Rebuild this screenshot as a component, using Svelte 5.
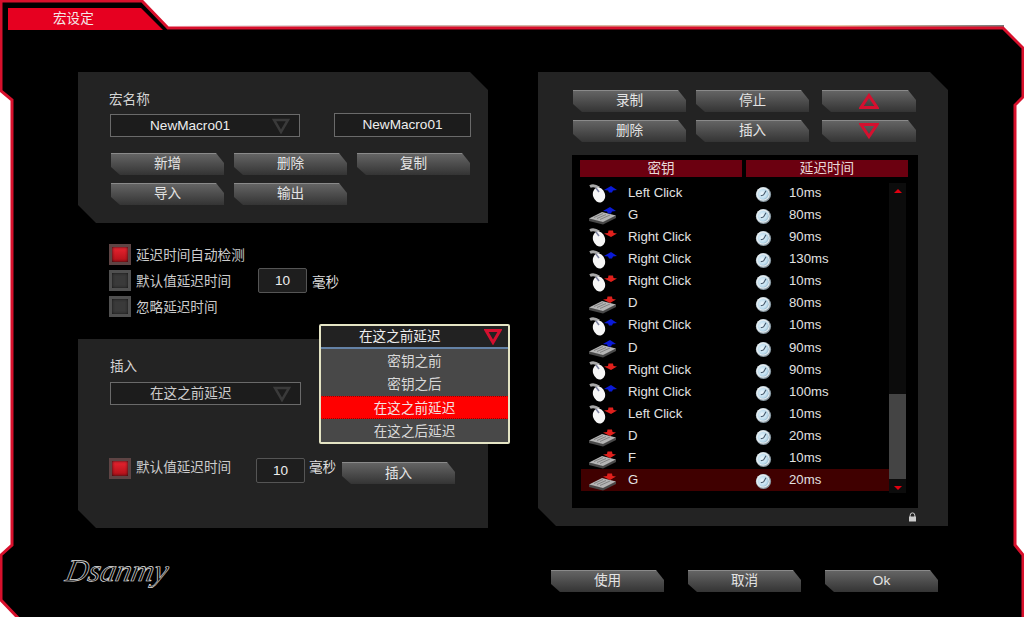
<script lang="ts">
  const rows = [
    { dev: "mouse", dir: "up", key: "Left Click", delay: "10ms" },
    { dev: "kbd", dir: "up", key: "G", delay: "80ms" },
    { dev: "mouse", dir: "down", key: "Right Click", delay: "90ms" },
    { dev: "mouse", dir: "up", key: "Right Click", delay: "130ms" },
    { dev: "mouse", dir: "down", key: "Right Click", delay: "10ms" },
    { dev: "kbd", dir: "down", key: "D", delay: "80ms" },
    { dev: "mouse", dir: "up", key: "Right Click", delay: "10ms" },
    { dev: "kbd", dir: "up", key: "D", delay: "90ms" },
    { dev: "mouse", dir: "down", key: "Right Click", delay: "90ms" },
    { dev: "mouse", dir: "up", key: "Right Click", delay: "100ms" },
    { dev: "mouse", dir: "down", key: "Left Click", delay: "10ms" },
    { dev: "kbd", dir: "down", key: "D", delay: "20ms" },
    { dev: "kbd", dir: "down", key: "F", delay: "10ms" },
    { dev: "kbd", dir: "down", key: "G", delay: "20ms" },
  ];
  const selectedRow = 13;
  const insertOptions = ["密钥之前", "密钥之后", "在这之前延迟", "在这之后延迟"];
  const arrowUp = "M18 9 L25 5 L31 9 L27 9.5 L26 11.5 L23 11.5 L22 9.5 Z";
  const arrowDown = "M18 8.5 L22 8 L22.5 5.5 L27 5.5 L27.5 8 L31 8.5 L25 12 Z";
  let activeOption = $state(2);
  let delayMode = $state(0);
</script>

<div class="window">
  <svg class="frame" width="1024" height="617" viewBox="0 0 1024 617" aria-hidden="true">
    <defs>
      <linearGradient id="edge" x1="0" x2="1" y1="0" y2="0">
        <stop offset="0" stop-color="#fff" />
        <stop offset="0.25" stop-color="#c9b3b0" />
        <stop offset="0.55" stop-color="#d8b9a0" />
        <stop offset="0.8" stop-color="#e8c8a8" />
        <stop offset="1" stop-color="#777" />
      </linearGradient>
      <radialGradient id="face" cx="0.42" cy="0.45" r="0.65">
        <stop offset="0" stop-color="#eef7fc" />
        <stop offset="0.7" stop-color="#bcdcee" />
        <stop offset="1" stop-color="#86a4b8" />
      </radialGradient>
    </defs>
    <rect x="168" y="25" width="836" height="2" fill="url(#edge)" />
    <polygon
      points="1,1 142,1 168,28 1003,28 1023,48 1023,97 1015,105 1015,545 1023,555 1023,620 20,620 1,600 1,555 12,545 12,100 1,91"
      fill="#000"
      stroke="#d8102c"
      stroke-width="3"
    />
    <polygon points="8,8 141,8 163,30 8,30" fill="#e60020" />
  </svg>

  <div class="tab">宏设定</div>

  <main>
    <section class="left">
      <div class="panel name-panel">
        <div class="label">宏名称</div>
        <div class="name-row">
          <div class="select">
            <span>NewMacro01</span>
            <svg class="caret" width="18" height="16" viewBox="0 0 18 16"><path d="M2 2 H16 L9 14 Z" fill="none" stroke="#3a3a3a" stroke-width="2.5" /></svg>
          </div>
          <div class="text-input">NewMacro01</div>
        </div>
        <div class="btn-grid">
          <button type="button" class="btn">新增</button>
          <button type="button" class="btn">删除</button>
          <button type="button" class="btn">复制</button>
          <button type="button" class="btn">导入</button>
          <button type="button" class="btn">输出</button>
        </div>
      </div>

      <div class="options">
        {#each ["延迟时间自动检测", "默认值延迟时间", "忽略延迟时间"] as label, i}
          <div class="check-row">
            <button type="button" class="check" class:on={delayMode === i} aria-label={label} onclick={() => (delayMode = i)}></button>
            <span class="check-label">{label}</span>
            {#if i === 1}
              <div class="num">10</div>
              <span class="unit">毫秒</span>
            {/if}
          </div>
        {/each}
      </div>

      <div class="panel insert-panel">
        <div class="label">插入</div>
        <div class="select insert-select">
          <span>在这之前延迟</span>
          <svg class="caret" width="18" height="16" viewBox="0 0 18 16"><path d="M2 2 H16 L9 14 Z" fill="none" stroke="#3a3a3a" stroke-width="2.5" /></svg>
        </div>
        <div class="insert-row">
          <button type="button" class="check on" aria-label="默认值延迟时间"></button>
          <span class="check-label">默认值延迟时间</span>
          <div class="num">10</div>
          <span class="unit">毫秒</span>
          <button type="button" class="btn">插入</button>
        </div>
      </div>
    </section>

    <section class="panel right">
      <div class="tools">
        <button type="button" class="btn">录制</button>
        <button type="button" class="btn">停止</button>
        <button type="button" class="btn small" aria-label="上移">
          <svg width="20" height="16" viewBox="0 0 20 16"><path d="M10 2.5 L18 14.5 H2 Z" fill="none" stroke="#d5102f" stroke-width="3" /></svg>
        </button>
        <button type="button" class="btn">删除</button>
        <button type="button" class="btn">插入</button>
        <button type="button" class="btn small" aria-label="下移">
          <svg width="20" height="16" viewBox="0 0 20 16"><path d="M2 1.5 H18 L10 13.5 Z" fill="none" stroke="#d5102f" stroke-width="3" /></svg>
        </button>
      </div>

      <div class="list">
        <div class="list-head">
          <div>密钥</div>
          <div>延迟时间</div>
        </div>
        <div class="list-body">
          <div class="rows">
            {#each rows as row, i}
              <div class="row" class:selected={i === selectedRow}>
                <svg class="dev" width="34" height="22" viewBox="0 0 34 22" aria-hidden="true">
                  {#if row.dev === "mouse"}
                    <path d="M4 5.5 Q8 3.5 13 7" fill="none" stroke="#a8a8a8" stroke-width="3" />
                    <ellipse cx="13" cy="14" rx="6" ry="7.6" transform="rotate(-18 13 14)" fill="#f6f6f6" />
                    <path d="M10 7 L13 11" stroke="#7f84a2" stroke-width="1.5" />
                  {:else}
                    <path d="M3 15.5 L3 18 L17 21.5 L30 15 L30 12.5 L17 18.5 Z" fill="#484848" />
                    <path d="M3 15.5 L16 9 L30 12.5 L17 19 Z" fill="#b4b4b4" />
                    <path d="M8 14.5 L17 10.5 M11 15.5 L20 11.5 M14 16.5 L24 12" stroke="#7c7c7c" stroke-width="0.9" />
                  {/if}
                  <path
                    d={row.dir === "up" ? arrowUp : arrowDown}
                    transform={row.dev === "mouse" ? undefined : "translate(-1 -1)"}
                    fill={row.dir === "up" ? "#0a1ad8" : "#e0201c"}
                  />
                </svg>
                <span class="key">{row.key}</span>
                <svg class="clock" width="17" height="17" viewBox="0 0 17 17" aria-hidden="true">
                  <circle cx="8.5" cy="8.5" r="7.6" fill="#8a9aa4" />
                  <circle cx="8" cy="8" r="6.8" fill="#e4ecf0" />
                  <circle cx="8.2" cy="8.2" r="5.4" fill="url(#face)" />
                  <path d="M8.5 9 L11 4.8 M8.5 9 L5.8 9.8" stroke="#44586a" stroke-width="1.1" />
                </svg>
                <span class="delay">{row.delay}</span>
              </div>
            {/each}
          </div>
          <div class="scroll">
            <span class="arrow up"></span>
            <div class="thumb"></div>
            <span class="arrow down"></span>
          </div>
        </div>
      </div>

      <svg class="lock" width="9" height="10" viewBox="0 0 9 10" aria-hidden="true">
        <path d="M2.2 5 V3.2 a2.3 2.3 0 0 1 4.6 0 V5" fill="none" stroke="#ccc" stroke-width="1" />
        <rect x="1" y="4.5" width="7" height="5" fill="#ccc" />
      </svg>
    </section>
  </main>

  <footer>
    <div class="logo">Dsanmy</div>
    <div class="actions">
      <button type="button" class="btn">使用</button>
      <button type="button" class="btn">取消</button>
      <button type="button" class="btn">Ok</button>
    </div>
  </footer>

  <div class="popup">
    <div class="popup-head">
      <span>在这之前延迟</span>
      <svg width="18" height="16" viewBox="0 0 18 16"><path d="M2 1.5 H16 L9 13.5 Z" fill="none" stroke="#d5102f" stroke-width="3" /></svg>
    </div>
    <ul>
      {#each insertOptions as option, i}
        <li>
          <button type="button" class:active={i === activeOption} onclick={() => (activeOption = i)}>{option}</button>
        </li>
      {/each}
    </ul>
  </div>
</div>

<style>
  :global(body) {
    background: #fff;
  }
  .window {
    position: relative;
    width: 1024px;
    height: 617px;
    overflow: hidden;
    font-family: "Liberation Sans", "Noto Sans CJK SC", sans-serif;
    font-size: 13.6px;
    color: #ddd;
  }
  .frame {
    position: absolute;
    inset: 0;
  }
  .tab {
    position: absolute;
    top: 8px;
    left: 53px;
    line-height: 21px;
    color: #f4e6e6;
  }
  main {
    position: relative;
    display: grid;
    grid-template-columns: 410px 410px;
    column-gap: 50px;
    padding: 72px 0 0 78px;
    height: 526px;
    box-sizing: border-box;
  }
  footer {
    position: relative;
    display: flex;
    justify-content: space-between;
    padding: 44px 86px 0 62px;
  }
  .panel {
    background: #232323;
    clip-path: polygon(0 0, calc(100% - 18px) 0, 100% 18px, 100% 100%, 18px 100%, 0 calc(100% - 18px));
    box-sizing: border-box;
  }
  .left {
    display: flex;
    flex-direction: column;
  }
  .label {
    line-height: 20px;
    color: #d4d4d4;
  }
  .name-panel {
    height: 151px;
    padding: 18px 17px 0 31px;
  }
  .name-row {
    display: flex;
    align-items: flex-end;
    justify-content: space-between;
    margin: 3px 0 16px 1px;
  }
  .select {
    position: relative;
    display: flex;
    align-items: center;
    width: 190px;
    height: 23px;
    box-sizing: border-box;
    border: 1px solid #6a6a6a;
    background: #1c1c1c;
    padding-left: 39px;
    color: #eee;
  }
  .caret {
    position: absolute;
    right: 9px;
    top: 3px;
  }
  .text-input {
    width: 137px;
    height: 24px;
    box-sizing: border-box;
    border: 1px solid #6a6a6a;
    background: #1c1c1c;
    text-align: center;
    line-height: 21px;
    color: #eee;
  }
  .btn-grid {
    display: grid;
    grid-template-columns: repeat(3, 113px);
    column-gap: 10px;
    row-gap: 8px;
    margin-left: 2px;
  }
  .btn {
    width: 113px;
    height: 22px;
    padding: 0 0 1px;
    border: none;
    border-top: 1px solid #8a8a8a;
    background: linear-gradient(#646464, #343434);
    clip-path: polygon(0 0, calc(100% - 8px) 0, 100% 10px, 100% 100%, 9px 100%, 0 calc(100% - 8px));
    font: inherit;
    line-height: 18px;
    color: #e4e4e4;
    box-sizing: border-box;
  }
  .btn.small {
    width: 94px;
    display: flex;
    justify-content: center;
    align-items: center;
    padding: 0 0 2px;
  }
  .options {
    display: flex;
    flex-direction: column;
    gap: 5px;
    padding: 21px 0 21px 31px;
    height: 116px;
    box-sizing: border-box;
  }
  .check-row,
  .insert-row {
    display: flex;
    align-items: center;
    height: 21px;
  }
  .check {
    width: 22px;
    height: 21px;
    flex-shrink: 0;
    padding: 0;
    border: 3px solid #505050;
    background: #3a3a3a;
    box-shadow: inset 0 0 3px #111;
    box-sizing: border-box;
  }
  .check.on {
    border-color: #5e4444;
    background: linear-gradient(#ea2430, #b01018);
  }
  .check-label {
    margin-left: 5px;
    padding-top: 2px;
    line-height: 20px;
    color: #ccc;
  }
  .num {
    width: 49px;
    height: 25px;
    box-sizing: border-box;
    border: 1px solid #555;
    border-radius: 2px;
    background: #1e1e1e;
    text-align: center;
    line-height: 23px;
    color: #eee;
  }
  .check-row .check-label {
    width: 122px;
  }
  .check-row .unit {
    margin-left: 5px;
  }
  .unit {
    color: #ddd;
  }
  .insert-panel {
    height: 189px;
    padding: 18px 0 0 31px;
  }
  .insert-panel .label {
    margin: 0 0 5px 1px;
  }
  .insert-select {
    margin-left: 1px;
    width: 191px;
    padding: 0 0 3px 39px;
    color: #ccc;
  }
  .insert-row {
    margin-top: 53px;
    height: 24px;
    align-items: flex-start;
  }
  .insert-row .check-label {
    width: 120px;
    padding-top: 0;
  }
  .insert-row .unit {
    margin-left: 4px;
    width: 33px;
    line-height: 20px;
  }
  .insert-row .btn {
    margin-top: 4px;
    padding-bottom: 0;
  }
  .right {
    position: relative;
    height: 454px;
    padding: 18px 30px 0 34px;
  }
  .tools {
    display: grid;
    grid-template-columns: 113px 113px 94px;
    column-gap: 10px;
    row-gap: 8px;
    margin-left: 1px;
    margin-bottom: 13px;
  }
  .tools .btn:nth-child(3n) {
    margin-left: 3px;
  }
  .list {
    width: 346px;
    height: 353px;
    background: #000;
    padding: 5px 0 0 8px;
    box-sizing: border-box;
  }
  .list-head {
    display: grid;
    grid-template-columns: 162px 162px;
    column-gap: 4px;
    text-align: center;
    line-height: 17px;
    color: #e8d8d8;
  }
  .list-head div {
    background: #6b0010;
  }
  .list-body {
    display: flex;
    margin-top: 4px;
    margin-left: 1px;
  }
  .rows {
    width: 308px;
  }
  .row {
    position: relative;
    display: flex;
    align-items: center;
    height: 22.15px;
    font-size: 13.2px;
    color: #e2e2e2;
  }
  .row.selected {
    background: #400000;
  }
  .dev {
    margin-left: 5px;
    flex-shrink: 0;
  }
  .key {
    margin-left: 8px;
    width: 127px;
  }
  .clock {
    flex-shrink: 0;
    margin-top: 4px;
  }
  .delay {
    margin-left: 17px;
  }
  .scroll {
    display: flex;
    flex-direction: column;
    align-items: center;
    width: 17px;
    height: 310px;
    margin-top: 2px;
    background: #0c0c0c;
  }
  .arrow {
    display: block;
    width: 0;
    height: 0;
    border-left: 4px solid transparent;
    border-right: 4px solid transparent;
  }
  .arrow.up {
    margin-top: 6px;
    border-bottom: 4px solid #e00010;
  }
  .arrow.down {
    margin-top: 7px;
    border-top: 4px solid #e00010;
  }
  .thumb {
    width: 17px;
    height: 85px;
    margin-top: 201px;
    background: #444;
  }
  .lock {
    position: absolute;
    right: 31px;
    bottom: 4px;
  }
  .logo {
    margin-top: -19px;
    font-family: "Liberation Serif", serif;
    font-style: italic;
    font-size: 31px;
    line-height: 40px;
    color: transparent;
    -webkit-text-stroke: 0.7px #e0e0e0;
    transform: skewX(-12deg);
    transform-origin: left bottom;
  }
  .actions {
    display: flex;
    gap: 24px;
  }
  .popup {
    position: absolute;
    left: 319px;
    top: 324px;
    width: 191px;
    height: 120px;
    box-sizing: border-box;
    border: 2px solid #e4e4c4;
    border-radius: 2px;
    background: #484848;
  }
  .popup-head {
    display: flex;
    align-items: center;
    justify-content: space-between;
    height: 21px;
    box-sizing: content-box;
    padding: 0 6px 0 38px;
    background: #222;
    border-bottom: 2px solid #6482a6;
    color: #eee;
  }
  .popup-head span {
    padding-bottom: 3px;
  }
  .popup ul {
    list-style: none;
    margin: 0;
    padding: 0;
  }
  .popup li {
    height: 23.3px;
  }
  .popup li button {
    display: block;
    width: 100%;
    height: 100%;
    padding: 0 0 5px;
    border: 1px solid transparent;
    background: none;
    font: inherit;
    color: #d8d8d8;
  }
  .popup li button.active {
    background: #f00;
    border-color: #900 transparent;
    border-style: dotted;
    color: #f4e0e0;
  }
</style>
